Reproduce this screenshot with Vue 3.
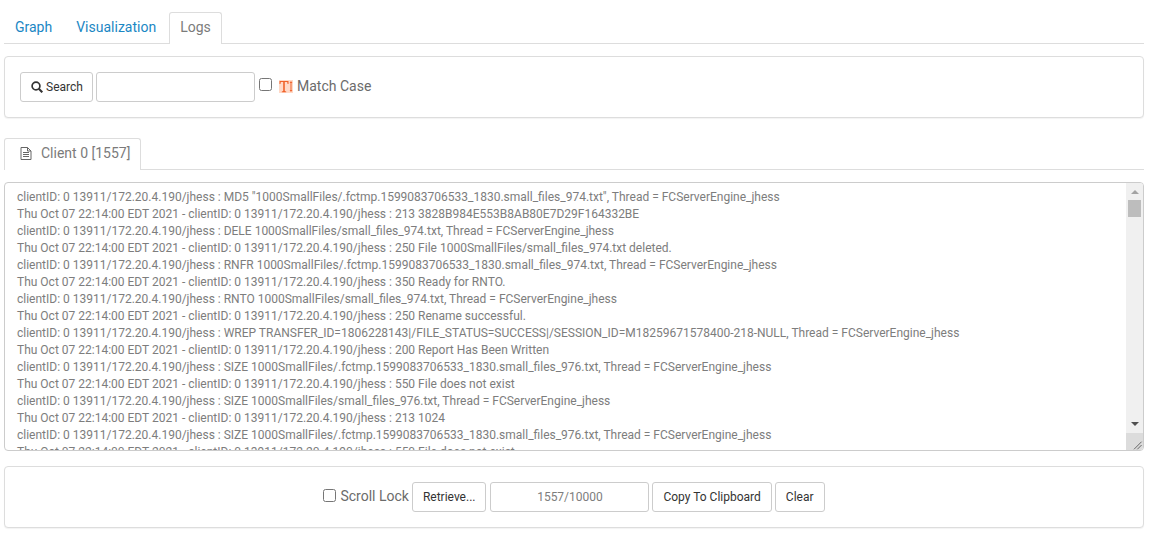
<script setup>
const P = 'clientID: 0 13911/172.20.4.190/jhess : '
const T = 'Thu Oct 07 22:14:00 EDT 2021 - ' + P
const E = ', Thread = FCServerEngine_jhess'
const lines = [
  P + 'MD5 "1000SmallFiles/.fctmp.1599083706533_1830.small_files_974.txt"' + E,
  T + '213 3828B984E553B8AB80E7D29F164332BE',
  P + 'DELE 1000SmallFiles/small_files_974.txt' + E,
  T + '250 File 1000SmallFiles/small_files_974.txt deleted.',
  P + 'RNFR 1000SmallFiles/.fctmp.1599083706533_1830.small_files_974.txt' + E,
  T + '350 Ready for RNTO.',
  P + 'RNTO 1000SmallFiles/small_files_974.txt' + E,
  T + '250 Rename successful.',
  P + 'WREP TRANSFER_ID=1806228143|/FILE_STATUS=SUCCESS|/SESSION_ID=M18259671578400-218-NULL' + E,
  T + '200 Report Has Been Written',
  P + 'SIZE 1000SmallFiles/.fctmp.1599083706533_1830.small_files_976.txt' + E,
  T + '550 File does not exist',
  P + 'SIZE 1000SmallFiles/small_files_976.txt' + E,
  T + '213 1024',
  P + 'SIZE 1000SmallFiles/.fctmp.1599083706533_1830.small_files_976.txt' + E,
  T + '550 File does not exist',
]
</script>

<template>
  <div class="page">
    <nav class="tabs main-tabs">
      <a class="tab">Graph</a>
      <a class="tab">Visualization</a>
      <a class="tab active">Logs</a>
    </nav>

    <section class="panel search-panel">
      <button class="btn search-btn">
        <svg class="search-icon" viewBox="0 0 12 12" width="12" height="12">
          <circle cx="5" cy="5" r="3.9" fill="none" stroke="#333" stroke-width="1.7" />
          <path d="M7.8 7.8 L11.3 11.3" stroke="#333" stroke-width="2.1" />
        </svg>
        Search
      </button>
      <input class="input search-input" type="text" />
      <input class="check" type="checkbox" />
      <svg class="case-icon" viewBox="0 0 14 13" width="14" height="13">
        <rect width="14" height="13" fill="#ffd9c7" />
        <path d="M0.5 1 H9.5 V4 H8.6 L8.2 2 H5.8 V11 L7.2 11.6 V12.3 H2.8 V11.6 L4.2 11 V2 H1.8 L1.4 4 H0.5 Z" fill="#f0622a" />
        <path d="M12 1 L13.4 3 H12.5 V10 H13.4 L12 12 L10.6 10 H11.5 V3 H10.6 Z" fill="#f0622a" />
      </svg>
      <span class="check-label">Match Case</span>
    </section>

    <nav class="tabs sub-tabs">
      <a class="tab active client-tab">
        <svg class="doc-icon" viewBox="0 0 12 13" width="12" height="13">
          <path d="M1 .5 H7.5 L11 4 V12.5 H1 Z M7.5 .5 V4 H11" fill="none" stroke="#666" />
          <path d="M3 5.5 H9 M3 7.5 H9 M3 9.5 H9" stroke="#666" />
        </svg>
        <span class="client-name">Client 0 [1557]</span>
      </a>
    </nav>

    <div class="log">
      <div class="log-text">
        <div v-for="(line, i) in lines" :key="i" class="log-line">{{ line }}</div>
      </div>
      <div class="scrollbar">
        <span class="arrow up"></span>
        <span class="thumb"></span>
        <span class="track"></span>
        <span class="arrow down"></span>
        <span class="corner">
          <svg viewBox="0 0 17 17" width="17" height="17">
            <path d="M15.6 8.7 L8 16.3 M15.6 12 L11.3 16.3" stroke="#666" stroke-width="1" />
          </svg>
        </span>
      </div>
    </div>

    <section class="panel footer-panel">
      <input class="check" type="checkbox" />
      <span class="check-label lock">Scroll Lock</span>
      <button class="btn">Retrieve...</button>
      <div class="input count">1557/10000</div>
      <button class="btn">Copy To Clipboard</button>
      <button class="btn">Clear</button>
    </section>
  </div>
</template>

<style>
html, body { margin: 0; background: #fff; }
</style>

<style scoped>
.page {
  box-sizing: border-box;
  width: 1156px;
  height: 537px;
  padding: 12px 12px 0 4px;
  font-family: Roboto, "Liberation Sans", sans-serif;
  font-size: 14px;
  color: #777;
  overflow: hidden;
}
.tabs {
  display: flex;
  height: 32px;
  box-sizing: border-box;
  border-bottom: 1px solid #ddd;
}
.tab {
  box-sizing: border-box;
  height: 32px;
  padding: 0 11px;
  line-height: 28px;
  color: #1b87c4;
  border: 1px solid transparent;
  border-bottom: 0;
  border-radius: 3px 3px 0 0;
}
.main-tabs .tab:first-child {
  margin-left: -1px;
}
.main-tabs .tab.active {
  margin-left: 1px;
  padding: 0 10px;
}
.tab.active {
  color: #7b7b7b;
  background: #fff;
  border-color: #ddd;
}
.panel {
  box-sizing: border-box;
  display: flex;
  align-items: center;
  height: 62px;
  background: #fff;
  border: 1px solid #ddd;
  border-radius: 4px;
  box-shadow: 0 1px 1px rgba(0, 0, 0, .05);
}
.search-panel {
  margin-top: 12px;
  padding-left: 15px;
}
.btn {
  box-sizing: border-box;
  height: 30px;
  padding: 0 10px;
  font: 12px Roboto, "Liberation Sans", sans-serif;
  color: #333;
  background: #fff;
  border: 1px solid #ccc;
  border-radius: 3px;
}
.search-btn {
  display: flex;
  align-items: center;
  gap: 3px;
  width: 73px;
}
.search-icon { flex: none; }
.input {
  box-sizing: border-box;
  height: 30px;
  background: #fff;
  border: 1px solid #ccc;
  border-radius: 3px;
}
.search-input {
  width: 159px;
  margin: 0 0 0 3px;
}
.check {
  width: 13px;
  height: 13px;
  margin: 0;
}
.search-panel .check {
  margin: 0 0 6px 4px;
}
.case-icon {
  margin: 0 4px 2px 7px;
}
.search-panel .check-label {
  margin-bottom: 2px;
}
.check-label {
  color: #6b6b6b;
}
.sub-tabs {
  margin-top: 20px;
}
.client-tab {
  width: 137px;
  padding: 0 0 3px 15px;
  display: flex;
  align-items: center;
  gap: 9px;
  line-height: 1;
  white-space: nowrap;
}
.doc-icon {
  flex: none;
}
.log {
  box-sizing: border-box;
  display: flex;
  height: 269px;
  margin-top: 12px;
  background: #fff;
  border: 1px solid #ccc;
  border-radius: 4px;
  overflow: hidden;
}
.log-text {
  flex: 1;
  min-width: 0;
  padding: 6px 12px;
  font-size: 12px;
  line-height: 17px;
  color: #7d7d7d;
  white-space: nowrap;
  overflow: hidden;
}
.scrollbar {
  flex: none;
  width: 17px;
  display: flex;
  flex-direction: column;
  align-items: center;
  background: #f0f0f0;
}
.arrow {
  flex: none;
  width: 0;
  height: 0;
  margin: 7px 0 6px;
  border-left: 4px solid transparent;
  border-right: 4px solid transparent;
}
.arrow.up { border-bottom: 4px solid #a3a3a3; }
.arrow.down { border-top: 4px solid #505050; margin: 6px 0 7px; }
.thumb {
  flex: none;
  width: 13px;
  height: 17px;
  background: #bdbdbd;
}
.track { flex: 1; }
.corner {
  flex: none;
  width: 17px;
  height: 17px;
  background: #dcdcdc;
}
.corner svg { display: block; }
.footer-panel {
  margin-top: 15px;
  justify-content: center;
}
.lock { margin: 0 3px 2px 4px; }
.footer-panel .check { margin-bottom: 4px; }
.count {
  width: 159px;
  font-size: 12px;
  line-height: 28px;
  text-align: center;
  color: #7d7d7d;
  margin: 0 3px 0 4px;
}
.footer-panel .btn + .btn { margin-left: 3px; }
</style>
